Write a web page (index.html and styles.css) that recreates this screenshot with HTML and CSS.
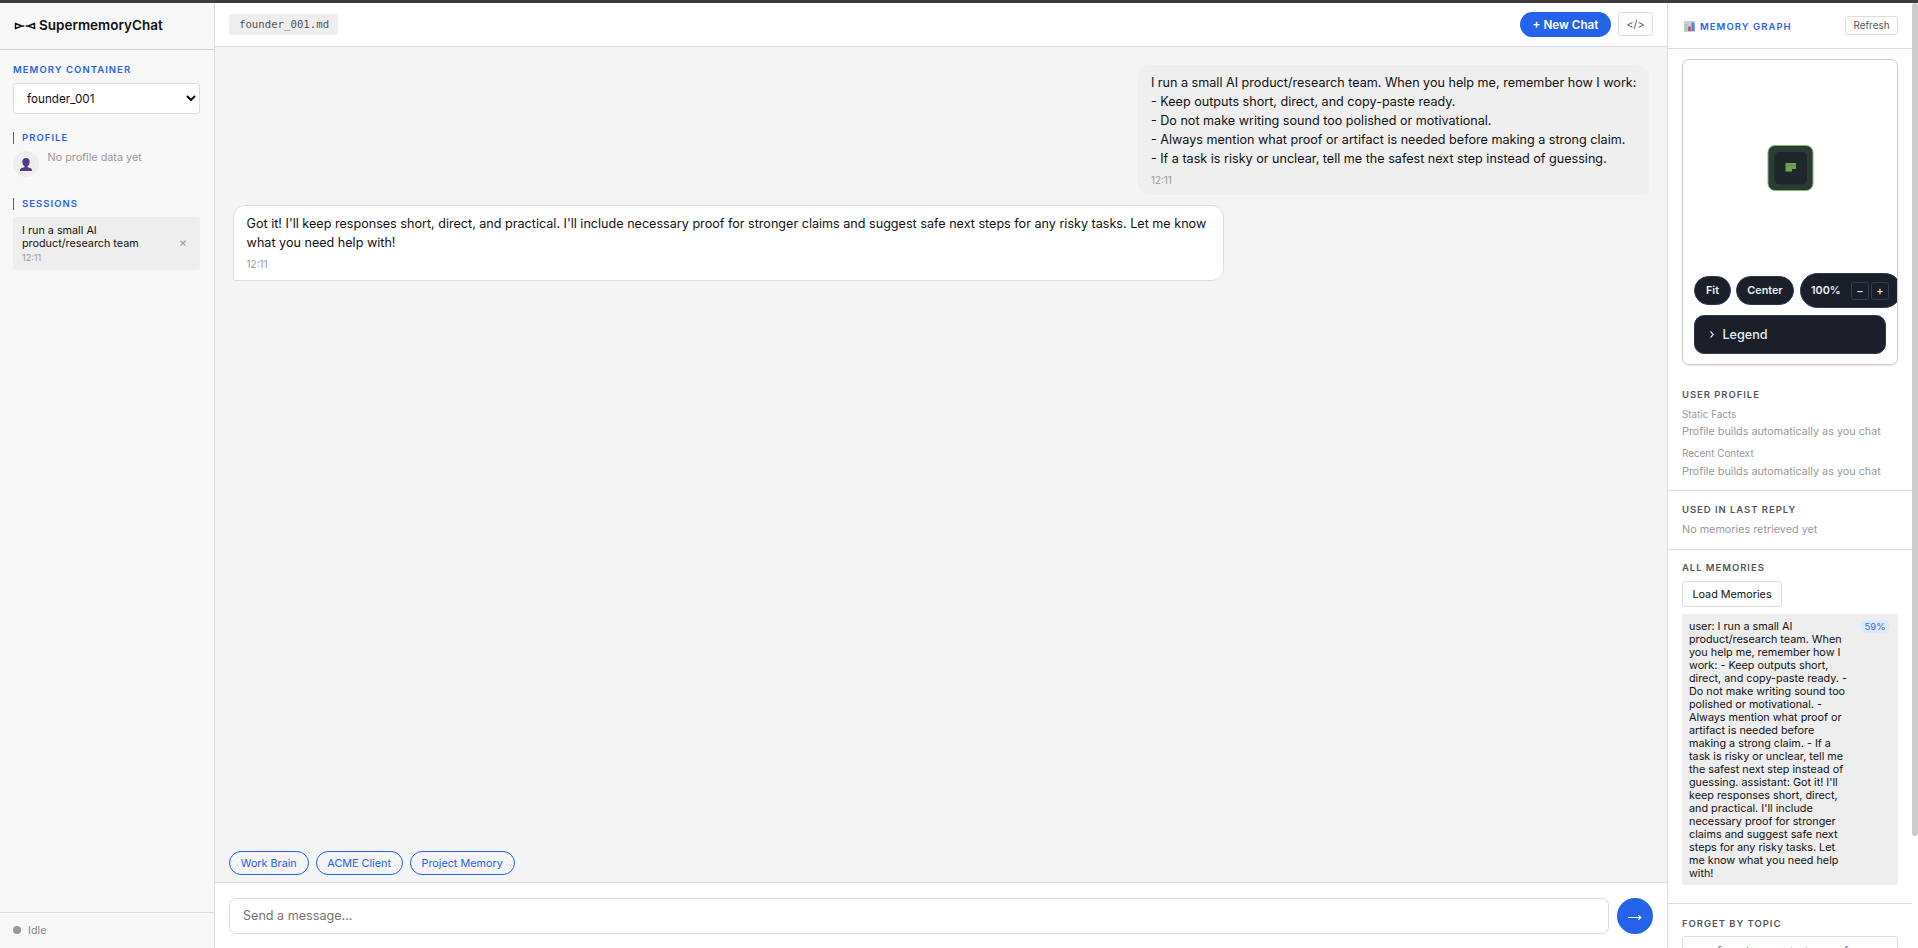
FILE: index.html
```html
<!DOCTYPE html>
<html lang="en">

<head>
    <meta charset="UTF-8">
    <meta name="viewport" content="width=device-width, initial-scale=1.0">
    <title>SupermemoryChat</title>
    <link rel="stylesheet" href="styles.css">
</head>

<body>
    <div class="app">
        <aside class="sidebar">
            <div class="logo">
                <svg class="logo-icon" width="22" height="8" viewBox="0 0 22 8">
                    <path d="M1.500 1.500 L8 4 L1.500 6.500 Z M20.500 1.500 L14 4 L20.500 6.500 Z M8 4 H10.300 M11.700 4 H14" fill="none" stroke="#111" stroke-width="1.4" />
                </svg>
                <span>SupermemoryChat</span>
            </div>
            <div class="sidebar-body">
                <label class="label" for="container">Memory Container</label>
                <select id="container" class="select">
                    <option>founder_001</option>
                </select>

                <h3 class="label label-bar">Profile</h3>
                <div class="profile">
                    <div class="avatar">
                        <svg width="12" height="13" viewBox="0 0 12 13">
                            <path d="M6 0C3.6 0 2.3 1.5 2.3 3.8c0 2 .9 3.6 2.2 4.4v1L1.6 10C.5 10.400 0 11.300 0 13h12c0-1.700-.5-2.600-1.600-3L7.500 9.200v-1c1.300-.8 2.200-2.400 2.200-4.400C9.700 1.500 8.400 0 6 0z" fill="#533a85" />
                        </svg>
                    </div>
                    <span class="muted">No profile data yet</span>
                </div>

                <h3 class="label label-bar">Sessions</h3>
                <div class="session">
                    <div class="session-info">
                        <div>I run a small AI product/research team</div>
                        <div class="session-time">12:11</div>
                    </div>
                    <button class="session-close">×</button>
                </div>
            </div>
            <div class="status"><span class="dot"></span>Idle</div>
        </aside>

        <main class="main">
            <header class="topbar">
                <span class="file">founder_001.md</span>
                <div class="actions">
                    <button class="new-chat">+ New Chat</button>
                    <button class="code-btn">&lt;/&gt;</button>
                </div>
            </header>

            <div class="messages">
                <div class="msg user">I run a small AI product/research team. When you help me, remember how I work:
- Keep outputs short, direct, and copy-paste ready.
- Do not make writing sound too polished or motivational.
- Always mention what proof or artifact is needed before making a strong claim.
- If a task is risky or unclear, tell me the safest next step instead of guessing.<div class="time">12:11</div></div>
                <div class="msg assistant">Got it! I'll keep responses short, direct, and practical. I'll include necessary proof for stronger claims and suggest safe next steps for any risky tasks. Let me know what you need help with!<div class="time">12:11</div></div>
            </div>

            <div class="chips">
                <button class="chip">Work Brain</button>
                <button class="chip">ACME Client</button>
                <button class="chip">Project Memory</button>
            </div>

            <div class="composer">
                <input type="text" class="message-input" placeholder="Send a message...">
                <button class="send">
                    <svg width="14" height="8" viewBox="0 0 14 8">
                        <path d="M0 4.500H13M10.300 2.300L13 4.500L10.300 6.700" fill="none" stroke="#fff" stroke-width="1.100" />
                    </svg>
                </button>
            </div>
        </main>

        <aside class="panel">
            <div class="panel-content">
                <div class="panel-header">
                    <svg class="chart-icon" width="11" height="11" viewBox="0 0 11 11">
                        <rect width="11" height="11" rx="1" fill="#cfcbd3" />
                        <rect x="1" y="3" width="2.500" height="7" fill="#8ce28c" />
                        <rect x="4.200" y="5.500" width="2.600" height="4.500" fill="#d63b72" />
                        <rect x="7.500" y="1.500" width="3" height="8.500" fill="#3f8fdc" />
                    </svg>
                    <h3 class="label">Memory Graph</h3>
                    <button class="refresh">Refresh</button>
                </div>

                <div class="graph">
                    <svg class="node" width="48" height="48" viewBox="0 0 48 48">
                        <rect x="2" y="1.500" width="45" height="45" rx="7" fill="#2c3b36" stroke="#7fb56f" />
                        <rect x="8.500" y="8" width="32.500" height="32.500" rx="5" fill="#1e2829" />
                        <path d="M19.500 19h10.500v6h-4v2.500h-6.500z" fill="#6fa458" />
                        <path d="M19.500 21.500h10.500" stroke="#5b8b4b" stroke-width=".8" />
                    </svg>
                    <div class="controls">
                        <button class="pill">Fit</button>
                        <button class="pill pill-center">Center</button>
                        <div class="pill zoom">
                            <span class="zoom-value">100%</span>
                            <button class="zoom-btn">−</button>
                            <button class="zoom-btn">+</button>
                        </div>
                    </div>
                    <div class="legend">
                        <svg width="4" height="7" viewBox="0 0 4 7">
                            <path d="M.5 .5L3.300 3.500L.5 6.500" fill="none" stroke="#e2e8f0" stroke-width="1.100" />
                        </svg>
                        Legend
                    </div>
                </div>

                <section class="section profile-section">
                    <h4>User Profile</h4>
                    <div class="sub">Static Facts</div>
                    <p class="muted">Profile builds automatically as you chat</p>
                    <div class="sub sub-next">Recent Context</div>
                    <p class="muted">Profile builds automatically as you chat</p>
                </section>

                <section class="section used">
                    <h4>Used in last reply</h4>
                    <p class="muted">No memories retrieved yet</p>
                </section>

                <section class="section memories">
                    <h4>All Memories</h4>
                    <button class="load">Load Memories</button>
                    <div class="memory">
                        <div class="memory-text">user: I run a small AI product/research team. When you help me, remember how I work: - Keep outputs short, direct, and copy-paste ready. - Do not make writing sound too polished or motivational. - Always mention what proof or artifact is needed before making a strong claim. - If a task is risky or unclear, tell me the safest next step instead of guessing. assistant: Got it! I'll keep responses short, direct, and practical. I'll include necessary proof for stronger claims and suggest safe next steps for any risky tasks. Let me know what you need help with!</div>
                        <span class="score">59%</span>
                    </div>
                </section>

                <section class="section forget">
                    <h4>Forget by topic</h4>
                    <input type="text" class="forget-input" placeholder="e.g. founder my startup prefs">
                </section>
            </div>
            <div class="scrollbar"><div class="thumb"></div></div>
        </aside>
    </div>
</body>

</html>
```
FILE: styles.css
```css
* {
    box-sizing: border-box;
    margin: 0;
    padding: 0;
}

body {
    font-family: Inter, sans-serif;
    font-size: 12.6px;
    color: #111;
    height: 100vh;
    overflow: hidden;
    border-top: 3px solid #3c3c3c;
}

button,
input,
select {
    font-family: inherit;
}

.app {
    display: grid;
    grid-template-columns: 215px 1fr 251px;
    height: calc(100vh - 3px);
}

.label {
    display: block;
    font-size: 9.5px;
    font-weight: 600;
    line-height: 12px;
    letter-spacing: 1.05px;
    text-transform: uppercase;
    color: #2563eb;
}

.muted {
    font-size: 10.8px;
    line-height: 13px;
    color: #999;
}

/* sidebar */
.sidebar {
    display: flex;
    flex-direction: column;
    background-color: #f8f8f8;
    border-right: 1px solid #ddd;
}

.logo {
    display: flex;
    align-items: center;
    gap: 3px;
    height: 47px;
    padding: 0 14px 2px;
    font-size: 13.5px;
    font-weight: 600;
    border-bottom: 1px solid #d0d0d0;
}

.logo-icon {
    margin-top: 2px;
}

.sidebar-body {
    flex: 1;
    padding: 14px 14px 0 13px;
}

.select {
    display: block;
    width: 187px;
    height: 31px;
    margin: 7px 0 18px;
    padding: 0 9px;
    font-size: 11.7px;
    color: #111;
    background-color: #fff;
    border: 1px solid #ddd;
    border-radius: 3px;
}

.label-bar {
    padding-left: 8px;
    border-left: 1px solid #2563eb;
}

.profile {
    display: flex;
    gap: 8.5px;
    margin: 7px 0 21px;
}

.avatar {
    display: flex;
    justify-content: center;
    align-items: center;
    width: 26px;
    height: 26px;
    background-color: #eee;
    border-radius: 50%;
}

.session {
    display: flex;
    align-items: center;
    justify-content: space-between;
    width: 187px;
    height: 53px;
    margin-top: 7px;
    padding: 0 10px 0 9px;
    font-size: 10.8px;
    line-height: 13px;
    background-color: #eee;
    border-radius: 3px;
}

.session-info {
    width: 140px;
}

.session-time {
    margin-top: 2px;
    font-size: 9px;
    line-height: 12px;
    color: #999;
}

.session-close {
    width: 14px;
    margin-bottom: 2px;
    font-size: 12.6px;
    color: #999;
    background: none;
    border: none;
}

.status {
    display: flex;
    align-items: center;
    gap: 7px;
    height: 36px;
    padding: 0 0 1px 13px;
    font-size: 10.8px;
    color: #888;
    border-top: 1px solid #ddd;
}

.dot {
    width: 8px;
    height: 8px;
    background-color: #999;
    border-radius: 50%;
}

/* chat */
.main {
    display: flex;
    flex-direction: column;
    min-width: 0;
    background-color: #f4f4f4;
}

.topbar {
    display: flex;
    align-items: center;
    justify-content: space-between;
    height: 44px;
    padding: 0 14px;
    background-color: #fff;
    border-bottom: 1px solid #ddd;
}

.file {
    padding: 0 10px;
    height: 21px;
    width: 109px;
    font-family: "DejaVu Sans Mono", monospace;
    font-size: 10.7px;
    line-height: 21px;
    color: #555;
    background-color: #eee;
    border-radius: 3px;
}

.actions {
    display: flex;
    gap: 7px;
}

.new-chat {
    width: 91px;
    height: 25px;
    font-size: 11.7px;
    font-weight: 600;
    color: #fff;
    background-color: #2563eb;
    border: none;
    border-radius: 13px;
}

.code-btn {
    width: 35px;
    height: 24px;
    font-size: 10.8px;
    color: #555;
    background-color: #fff;
    border: 1px solid #ddd;
    border-radius: 3px;
}

.messages {
    flex: 1;
    display: flex;
    flex-direction: column;
    gap: 10px;
    padding: 18px;
}

.msg {
    max-width: 70%;
    padding: 9px 12.6px;
    font-size: 12.6px;
    line-height: 18.9px;
    white-space: pre-wrap;
    border-radius: 12px;
}

.user {
    align-self: flex-end;
    height: 130px;
    background-color: #efefef;
    border-bottom-right-radius: 2px;
}

.assistant {
    align-self: flex-start;
    height: 76px;
    background-color: #fff;
    border: 1px solid #ddd;
    border-bottom-left-radius: 2px;
}

.time {
    margin-top: 5.6px;
    font-size: 9.9px;
    line-height: 12px;
    color: #999;
}

.chips {
    display: flex;
    gap: 7px;
    padding: 0 14px 7px;
}

.chip {
    height: 24px;
    padding: 0 10.8px;
    font-size: 10.8px;
    color: #2563eb;
    background: none;
    border: 1px solid #2563eb;
    border-radius: 12px;
}

.composer {
    display: flex;
    gap: 8px;
    height: 66px;
    padding: 15px 14px 14px;
    background-color: #fff;
    border-top: 1px solid #ddd;
}

.message-input {
    flex: 1;
    height: 36px;
    padding: 0 13px 1px;
    font-size: 12.6px;
    border: 1px solid #ddd;
    border-radius: 7px;
}

.send {
    display: flex;
    justify-content: center;
    align-items: center;
    width: 36px;
    height: 36px;
    padding-top: 2px;
    background-color: #2563eb;
    border: none;
    border-radius: 50%;
}

/* right panel */
.panel {
    display: flex;
    min-width: 0;
    overflow: hidden;
    background-color: #fff;
    border-left: 1px solid #ddd;
}

.panel-content {
    flex: 1;
    min-width: 0;
}

.panel-header {
    display: flex;
    align-items: center;
    height: 46px;
    padding: 0 14px 0 16px;
    border-bottom: 1px solid #ddd;
}

.panel-header .label {
    flex: 1;
    margin: 2px 0 0 5px;
}

.chart-icon {
    margin-top: 1px;
}

.refresh {
    width: 53px;
    height: 19px;
    margin-bottom: 1px;
    font-size: 9.9px;
    color: #555;
    background-color: #fff;
    border: 1px solid #ddd;
    border-radius: 3px;
}

.graph {
    display: flex;
    flex-direction: column;
    width: 216px;
    height: 306px;
    margin: 10px 14px 0;
    padding: 84px 11px 0;
    overflow: hidden;
    border: 1px solid #ccc;
    border-radius: 7px;
    box-shadow: 0 1px 2px rgba(0, 0, 0, 0.1);
}

.node {
    align-self: center;
    flex-shrink: 0;
}

.controls {
    display: flex;
    align-items: center;
    gap: 5px;
    height: 35px;
    margin-top: 81px;
}

.pill {
    flex-shrink: 0;
    width: 37px;
    height: 29px;
    font-size: 10.8px;
    font-weight: 600;
    color: #e8edf4;
    background-color: #1b1f29;
    border: 1px solid #2a3a50;
    border-radius: 18px;
}

.pill-center {
    width: 58px;
}

.zoom {
    display: flex;
    align-items: center;
    gap: 2px;
    width: 102px;
    height: 35px;
    margin-left: 1px;
    padding-left: 10px;
}

.zoom-value {
    width: 38px;
}

.zoom-btn {
    width: 18px;
    height: 18px;
    font-size: 11px;
    font-weight: 500;
    line-height: 14px;
    color: #e8edf4;
    background: none;
    border: 1px solid #2f3f56;
    border-radius: 3px;
}

.legend {
    display: flex;
    align-items: center;
    gap: 9px;
    width: 192px;
    height: 39px;
    margin-top: 7px;
    padding: 0 0 1px 14.5px;
    font-size: 12.6px;
    font-weight: 500;
    color: #e8edf4;
    background-color: #1b1f29;
    border: 1px solid #2a3a50;
    border-radius: 10px;
}

.section {
    padding: 0 14px;
    border-bottom: 1px solid #ddd;
}

.section h4 {
    font-size: 9.5px;
    font-weight: 600;
    line-height: 12px;
    letter-spacing: 0.95px;
    text-transform: uppercase;
    color: #555;
}

.sub {
    margin: 7px 0 5px;
    font-size: 9.9px;
    line-height: 12px;
    color: #999;
}

.sub-next {
    margin: 9px 0 6px;
}

.profile-section {
    height: 126px;
    padding-top: 24px;
}

.used {
    height: 59px;
    padding-top: 13px;
}

.used .muted {
    margin-top: 7px;
}

.memories {
    height: 354px;
    padding-top: 12px;
}

.load {
    display: block;
    width: 100px;
    height: 26px;
    margin: 7px 0;
    font-size: 10.8px;
    color: #111;
    background-color: #fff;
    border: 1px solid #ddd;
    border-radius: 3px;
}

.memory {
    display: flex;
    align-items: flex-start;
    justify-content: space-between;
    height: 271px;
    padding: 6px 8px 6px 7px;
    font-size: 10.8px;
    line-height: 13px;
    background-color: #eee;
    border-radius: 3px;
}

.memory-text {
    width: 160px;
}

.score {
    width: 30px;
    font-size: 9.5px;
    text-align: center;
    color: #4169e1;
    background-color: #dbeafe;
    border-radius: 7px;
}

.forget {
    padding-top: 14px;
}

.forget-input {
    width: 216px;
    height: 31px;
    margin-top: 6px;
    padding: 0 10px;
    font-size: 11.7px;
    border: 1px solid #ddd;
    border-radius: 3px;
}

.scrollbar {
    width: 6px;
}

.thumb {
    height: 833px;
    background-color: #ccc;
    border-radius: 3px;
}
```
